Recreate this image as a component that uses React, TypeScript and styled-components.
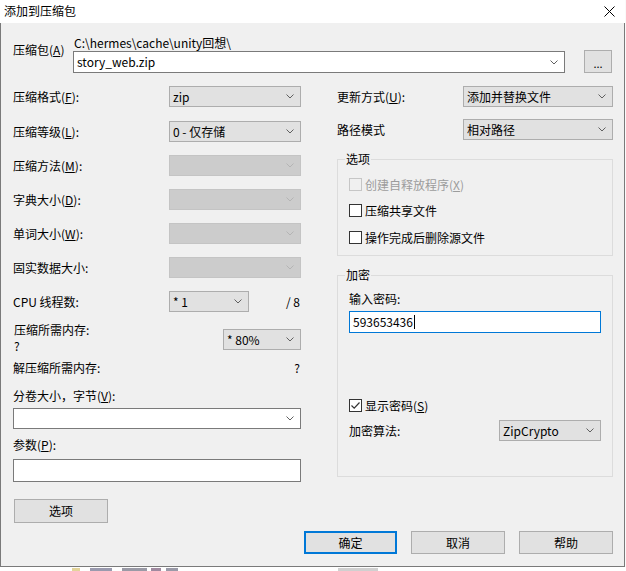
import React from 'react';
import styled, { createGlobalStyle } from 'styled-components';

const GlobalStyle = createGlobalStyle`
  html, body {
    margin: 0;
    padding: 0;
    background: #fafafa;
  }
  body {
    font-family: "Noto Sans CJK SC", "Noto Sans", sans-serif;
    font-size: 12px;
    color: #000;
  }
  * { box-sizing: border-box; }
`;

const Window = styled.div`
  width: 625px;
  height: 567px;
  display: flex;
  flex-direction: column;
  background: #f0f0f0;
`;

const TitleBar = styled.div`
  height: 23px;
  flex: none;
  display: flex;
  align-items: center;
  justify-content: space-between;
  padding: 0 10px 1px 4px;
  background: #fff;
  line-height: 16px;
`;

const Body = styled.div`
  flex: 1;
  display: flex;
  flex-direction: column;
  padding: 12px 10px 0 12px;
  border: 1px solid #7a7a7a;
  border-top: none;
`;

const ArchiveRow = styled.div`
  display: flex;
  align-items: flex-start;
`;

const ArchiveLabel = styled.div`
  width: 60px;
  margin-top: 7px;
  line-height: 16px;
`;

const ArchiveField = styled.div`
  width: 492px;
  display: flex;
  flex-direction: column;
`;

const PathText = styled.div`
  line-height: 16px;
  padding-left: 1px;
`;

const Columns = styled.div`
  display: flex;
  gap: 36px;
  margin-top: 13px;
`;

const Column = styled.div<{ $w: number }>`
  width: ${({ $w }) => $w}px;
  display: flex;
  flex-direction: column;
`;

const FieldRow = styled.div<{ $mt?: number }>`
  display: flex;
  align-items: center;
  height: 21px;
  margin-top: ${({ $mt = 0 }) => $mt}px;
`;

const Label = styled.span`
  flex: 1;
  line-height: 16px;
  white-space: nowrap;
`;

const FixedLabel = styled.span<{ $w: number }>`
  width: ${({ $w }) => $w}px;
  line-height: 16px;
  white-space: nowrap;
`;

const Ratio = styled.span`
  flex: 1;
  text-align: right;
  padding-right: 1px;
`;

const MemoryRow = styled.div`
  display: flex;
  align-items: flex-start;
  margin-top: 10px;
`;

const MemoryText = styled.div`
  flex: 1;
  display: flex;
  flex-direction: column;
`;

const MemoryLine = styled.span`
  height: 16px;
  line-height: 16px;
  padding-left: 1px;
`;

const InfoRow = styled.div`
  display: flex;
  justify-content: space-between;
  line-height: 16px;
  margin-top: 6px;
  padding-right: 1px;
`;

const Caption = styled.div<{ $mt: number }>`
  line-height: 16px;
  margin-top: ${({ $mt }) => $mt}px;
  white-space: nowrap;
`;

const SelectBox = styled.div<{
  $w?: number;
  $h?: number;
  $mt?: number;
  $variant?: 'normal' | 'disabled' | 'edit';
}>`
  width: ${({ $w }) => ($w ? `${$w}px` : '100%')};
  height: ${({ $h = 21 }) => $h}px;
  margin-top: ${({ $mt = 0 }) => $mt}px;
  flex: none;
  display: flex;
  align-items: center;
  padding: 0 6px 0 3px;
  border: 1px solid
    ${({ $variant }) =>
      $variant === 'disabled' ? '#c4c4c4' : $variant === 'edit' ? '#7a7a7a' : '#adadad'};
  background: ${({ $variant }) =>
    $variant === 'disabled' ? '#cccccc' : $variant === 'edit' ? '#ffffff' : '#e1e1e1'};
  line-height: 16px;
  white-space: nowrap;
`;

const SelectText = styled.span`
  flex: 1;
  overflow: hidden;
`;

const TextInput = styled.div<{ $mt?: number; $h: number; $focused?: boolean; $w?: number }>`
  width: ${({ $w }) => ($w ? `${$w}px` : '100%')};
  height: ${({ $h }) => $h}px;
  margin-top: ${({ $mt = 0 }) => $mt}px;
  display: flex;
  align-items: center;
  padding: 0 3px;
  background: #fff;
  border: 1px solid ${({ $focused }) => ($focused ? '#0078d7' : '#7a7a7a')};
  line-height: 16px;
`;

const Caret = styled.span`
  display: inline-block;
  width: 1px;
  height: 14px;
  background: #000;
  margin-left: 1px;
`;

const Button = styled.div<{ $w: number; $h?: number; $default?: boolean }>`
  width: ${({ $w }) => $w}px;
  height: ${({ $h = 23 }) => $h}px;
  flex: none;
  display: flex;
  align-items: center;
  justify-content: center;
  background: #e1e1e1;
  border: ${({ $default }) => ($default ? '2px solid #0078d7' : '1px solid #adadad')};
  line-height: 16px;
`;

const BrowseButton = styled(Button)`
  margin-left: 19px;
  margin-top: 15px;
  padding-top: 3px;
  font-size: 11px;
`;

const OptionsButton = styled(Button)`
  margin-top: 17px;
  margin-left: 1px;
`;

const ButtonBar = styled.div`
  display: flex;
  justify-content: flex-end;
  gap: 14px;
  margin-top: 8px;
  padding-right: 1px;
`;

const Group = styled.fieldset<{ $mt: number; $pb: number }>`
  margin: ${({ $mt }) => $mt}px 0 0 0;
  padding: 0 11px ${({ $pb }) => $pb}px;
  border: 1px solid #dcdcdc;
  display: flex;
  flex-direction: column;
  min-width: 0;
`;

const Legend = styled.legend`
  margin-left: -4px;
  padding: 0 1px;
  line-height: 16px;
`;

const CheckRow = styled.div<{ $mt: number; $disabled?: boolean }>`
  display: flex;
  align-items: center;
  gap: 3px;
  height: 16px;
  margin-top: ${({ $mt }) => $mt}px;
  color: ${({ $disabled }) => ($disabled ? '#9c9c9c' : '#000')};
  white-space: nowrap;
`;

const CheckBox = styled.span<{ $disabled?: boolean }>`
  width: 13px;
  height: 13px;
  flex: none;
  display: flex;
  align-items: center;
  justify-content: center;
  border: 1px solid ${({ $disabled }) => ($disabled ? '#c6c6c6' : '#333')};
  background: ${({ $disabled }) => ($disabled ? '#f0f0f0' : '#fff')};
`;

const BackStrip = styled.div`
  display: flex;
  align-items: center;
  height: 4px;
  background: #fff;
`;

const Speck = styled.span<{ $w: number; $ml: number; $c: string }>`
  width: ${({ $w }) => $w}px;
  height: 3px;
  margin-left: ${({ $ml }) => $ml}px;
  background: ${({ $c }) => $c};
`;

const Chevron = ({ color = '#606060' }: { color?: string }) => (
  <svg width="8" height="5" viewBox="0 0 8 5" fill="none">
    <path d="M0.5 0.5 L4 4 L7.5 0.5" stroke={color} strokeWidth="1" />
  </svg>
);

const CloseIcon = () => (
  <svg width="11" height="11" viewBox="0 0 11 11" fill="none" stroke="#000" strokeWidth="1">
    <line x1="0.5" y1="0.5" x2="10.5" y2="10.5" />
    <line x1="10.5" y1="0.5" x2="0.5" y2="10.5" />
  </svg>
);

const CheckMark = () => (
  <svg width="11" height="11" viewBox="0 0 11 11" fill="none">
    <path d="M1.5 5.5 L4.2 8.2 L9.5 2.5" stroke="#333" strokeWidth="1.2" />
  </svg>
);

type SelectProps = {
  value?: string;
  w?: number;
  h?: number;
  mt?: number;
  variant?: 'normal' | 'disabled' | 'edit';
};

const Select: React.FC<SelectProps> = ({ value = '', w, h, mt, variant = 'normal' }) => (
  <SelectBox $w={w} $h={h} $mt={mt} $variant={variant}>
    <SelectText>{value}</SelectText>
    <Chevron color={variant === 'disabled' ? '#b4b4b4' : '#606060'} />
  </SelectBox>
);

const Key = ({ k }: { k: string }) => (
  <>
    (<u>{k}</u>)
  </>
);

export default function App() {
  return (
    <>
      <GlobalStyle />
      <Window>
        <TitleBar>
          <span>添加到压缩包</span>
          <CloseIcon />
        </TitleBar>
        <Body>
          <ArchiveRow>
            <ArchiveLabel>
              压缩包<Key k="A" />
            </ArchiveLabel>
            <ArchiveField>
              <PathText>C:\hermes\cache\unity回想\</PathText>
              <Select value="story_web.zip" h={22} variant="edit" />
            </ArchiveField>
            <BrowseButton $w={28}>...</BrowseButton>
          </ArchiveRow>

          <Columns>
            <Column $w={288}>
              <FieldRow>
                <Label>
                  压缩格式<Key k="F" />:
                </Label>
                <Select value="zip" w={132} />
              </FieldRow>
              <FieldRow $mt={14}>
                <Label>
                  压缩等级<Key k="L" />:
                </Label>
                <Select value="0 - 仅存储" w={132} />
              </FieldRow>
              <FieldRow $mt={13}>
                <Label>
                  压缩方法<Key k="M" />:
                </Label>
                <Select w={132} variant="disabled" />
              </FieldRow>
              <FieldRow $mt={13}>
                <Label>
                  字典大小<Key k="D" />:
                </Label>
                <Select w={132} variant="disabled" />
              </FieldRow>
              <FieldRow $mt={13}>
                <Label>
                  单词大小<Key k="W" />:
                </Label>
                <Select w={132} variant="disabled" />
              </FieldRow>
              <FieldRow $mt={13}>
                <Label>固实数据大小:</Label>
                <Select w={132} variant="disabled" />
              </FieldRow>
              <FieldRow $mt={13}>
                <FixedLabel $w={156}>CPU 线程数:</FixedLabel>
                <Select value="* 1" w={80} />
                <Ratio>/ 8</Ratio>
              </FieldRow>
              <MemoryRow>
                <MemoryText>
                  <MemoryLine>压缩所需内存:</MemoryLine>
                  <MemoryLine>?</MemoryLine>
                </MemoryText>
                <Select value="* 80%" w={78} mt={7} />
              </MemoryRow>
              <InfoRow>
                <span>解压缩所需内存:</span>
                <span>?</span>
              </InfoRow>
              <Caption $mt={12}>
                分卷大小，字节<Key k="V" />:
              </Caption>
              <Select mt={4} variant="edit" />
              <Caption $mt={8}>
                参数<Key k="P" />:
              </Caption>
              <TextInput $mt={6} $h={23} />
              <OptionsButton $w={94} $h={24}>
                选项
              </OptionsButton>
            </Column>

            <Column $w={276}>
              <FieldRow>
                <Label>
                  更新方式<Key k="U" />:
                </Label>
                <Select value="添加并替换文件" w={150} />
              </FieldRow>
              <FieldRow $mt={12}>
                <Label>路径模式</Label>
                <Select value="相对路径" w={150} />
              </FieldRow>

              <Group $mt={11} $pb={10}>
                <Legend>选项</Legend>
                <CheckRow $mt={9} $disabled>
                  <CheckBox $disabled />
                  <span>
                    创建自释放程序<Key k="X" />
                  </span>
                </CheckRow>
                <CheckRow $mt={10}>
                  <CheckBox />
                  <span>压缩共享文件</span>
                </CheckRow>
                <CheckRow $mt={11}>
                  <CheckBox />
                  <span>操作完成后删除源文件</span>
                </CheckRow>
              </Group>

              <Group $mt={11} $pb={35}>
                <Legend>加密</Legend>
                <Caption $mt={8}>输入密码:</Caption>
                <TextInput $mt={4} $h={22} $focused>
                  593653436
                  <Caret />
                </TextInput>
                <CheckRow $mt={64}>
                  <CheckBox>
                    <CheckMark />
                  </CheckBox>
                  <span>
                    显示密码<Key k="S" />
                  </span>
                </CheckRow>
                <FieldRow $mt={7}>
                  <Label>加密算法:</Label>
                  <Select value="ZipCrypto" w={102} />
                </FieldRow>
              </Group>
            </Column>
          </Columns>

          <ButtonBar>
            <Button $w={93} $default>
              确定
            </Button>
            <Button $w={94}>取消</Button>
            <Button $w={94}>帮助</Button>
          </ButtonBar>
        </Body>
      </Window>
      <BackStrip>
        <Speck $w={8} $ml={72} $c="#e3d49a" />
        <Speck $w={22} $ml={10} $c="#9a9aae" />
        <Speck $w={25} $ml={10} $c="#9a9aa6" />
        <Speck $w={10} $ml={4} $c="#a08aa0" />
        <Speck $w={12} $ml={5} $c="#9a9aa8" />
        <Speck $w={40} $ml={160} $c="#d0d0d0" />
      </BackStrip>
    </>
  );
}
